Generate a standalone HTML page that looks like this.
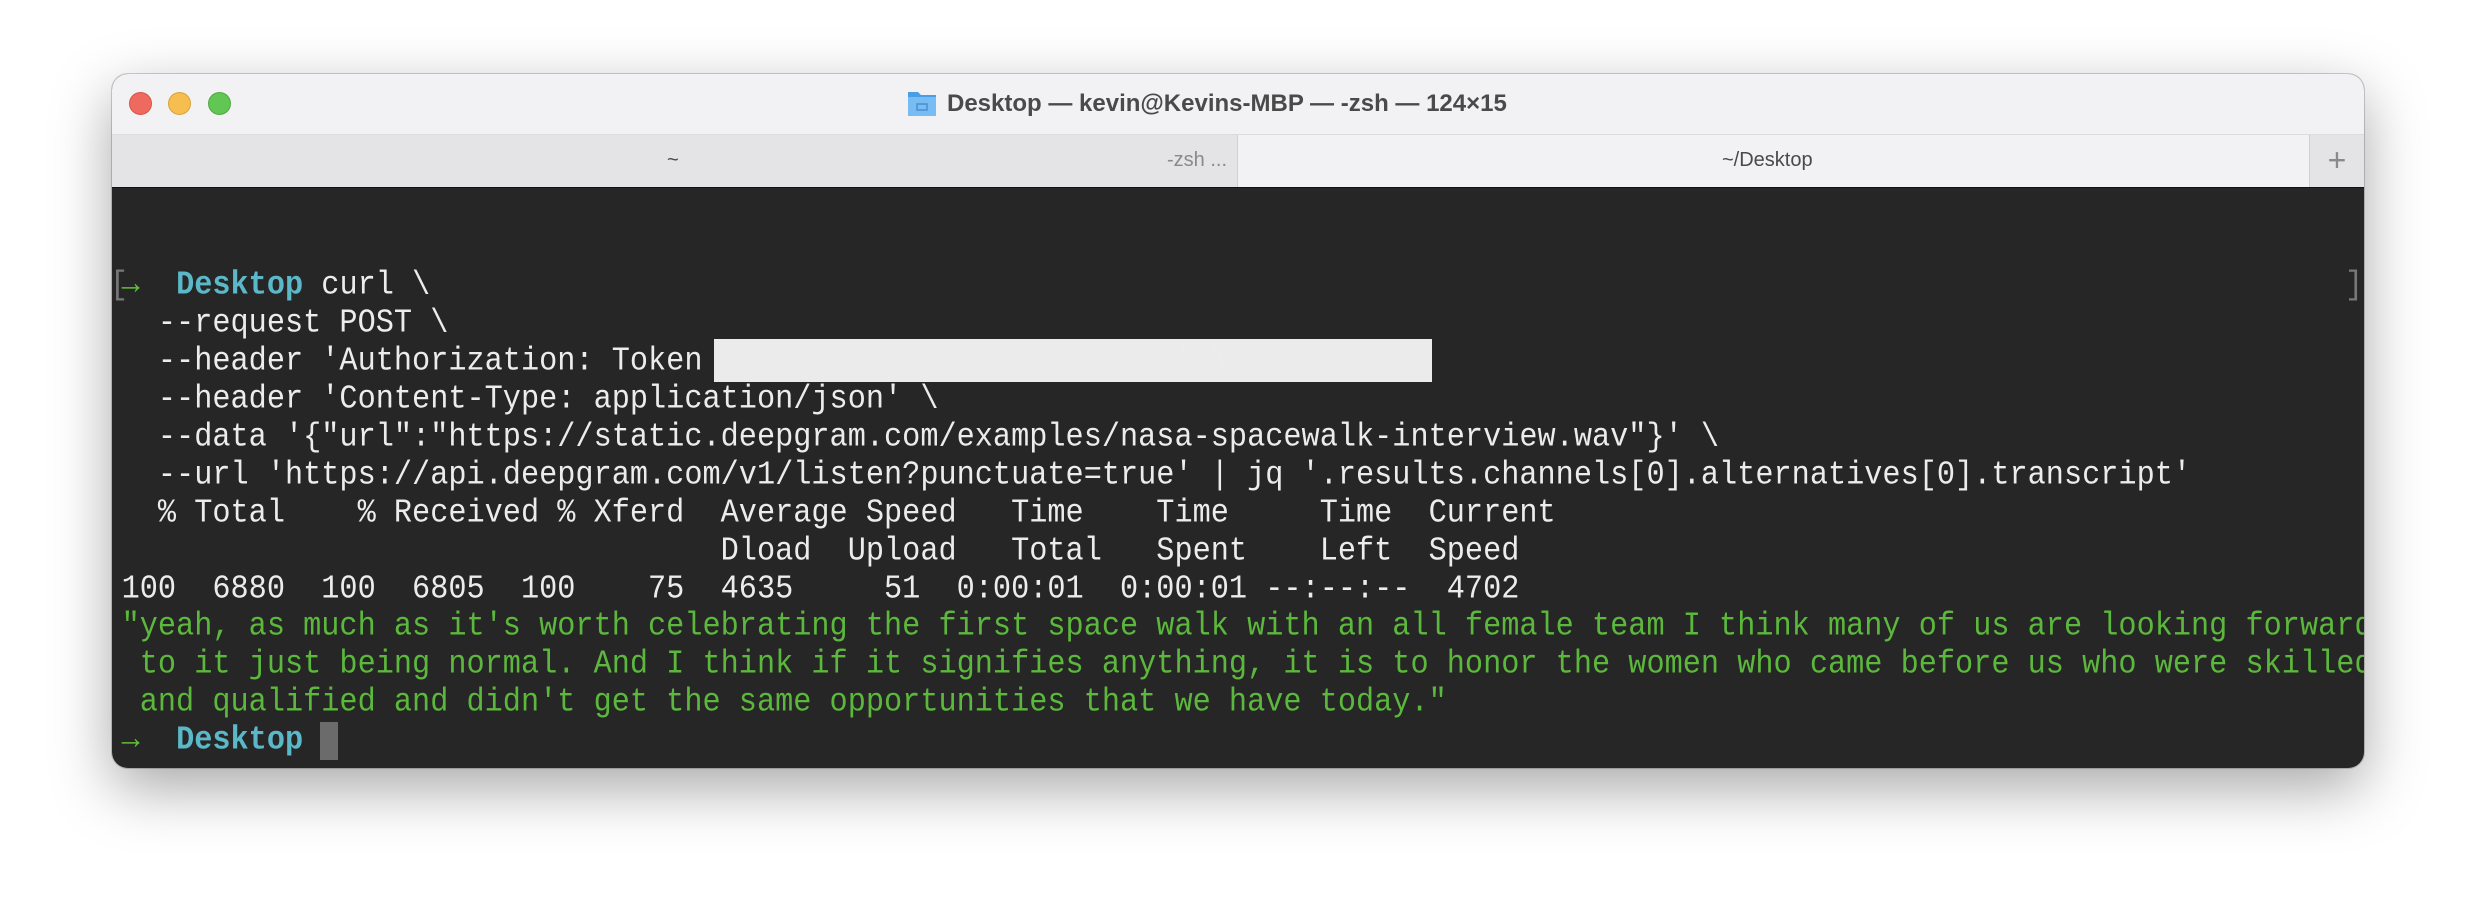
<!DOCTYPE html>
<html><head><meta charset="utf-8">
<style>
html,body{margin:0;padding:0;background:#fff;}
body{width:2476px;height:918px;position:relative;overflow:hidden;}
.win{position:absolute;left:112px;top:74px;width:2252px;height:694px;border-radius:16px;overflow:hidden;background:#262626;box-shadow:0 20px 60px rgba(0,0,0,0.35),0 0 0 1px rgba(0,0,0,0.18);}
.title{position:absolute;left:0;top:0;width:100%;height:60px;background:#f2f2f4;}
.dot{position:absolute;top:18px;width:21px;height:21px;border-radius:50%;}
.ttxt{position:absolute;left:835px;top:16px;font:bold 24px "Liberation Sans",sans-serif;color:#4a4a4a;white-space:nowrap;}
.tabs{position:absolute;left:0;top:60px;width:100%;height:52px;background:#f2f2f4;border-top:1px solid #dcdcde;border-bottom:1px solid #111;}
.tab1{position:absolute;left:0;top:0;width:1125px;height:52px;background:#e4e4e6;border-right:1px solid #d0d0d2;}
.plus{position:absolute;right:0;top:0;width:54px;height:52px;background:#e4e4e6;border-left:1px solid #d0d0d2;color:#8a8a8a;font:32px "Liberation Sans",sans-serif;text-align:center;line-height:50px;}
.tt{position:absolute;font:20px "Liberation Sans",sans-serif;color:#4a4a4a;top:14px;}
.term{position:absolute;left:0;top:113px;width:100%;}
.l{position:absolute;left:9.6px;font-family:"Liberation Mono",monospace;font-size:30.25px;line-height:38px;height:38px;white-space:pre;color:#ececec;transform:scaleY(1.1);transform-origin:0 50%;}
.c{color:#5ab8c8;font-weight:bold}
.g{color:#5fbe3a}
.q{color:#5cb83c}
</style></head><body>
<div class="win">
 <div class="title">
  <div class="dot" style="left:17px;background:#ee6a5f;border:1px solid #d55448;"></div>
  <div class="dot" style="left:56px;background:#f5be4f;border:1px solid #d9a23b;"></div>
  <div class="dot" style="left:96px;background:#62c655;border:1px solid #4ea843;"></div>
  <svg style="position:absolute;left:795px;top:15px" width="30" height="28" viewBox="0 0 30 28"><path d="M1 3h10l3 3h15v21H1z" fill="#4a9ee6"/><rect x="1" y="8" width="28" height="19" rx="1" fill="#77bdf3"/><rect x="10" y="15" width="10" height="6" fill="none" stroke="#4a8fd0" stroke-width="1.5"/></svg>
  <div class="ttxt">Desktop — kevin@Kevins-MBP — -zsh — 124×15</div>
 </div>
 <div class="tabs">
  <div class="tab1"><span class="tt" style="left:555px">~</span><span class="tt" style="right:10px;color:#8a8a8a">-zsh ...</span></div>
  <span class="tt" style="left:1610px">~/Desktop</span>
  <div class="plus">+</div>
 </div>
 <div class="term">
  <div style="position:absolute;left:602px;top:152px;width:718px;height:43px;background:#ebebeb;"></div>
  <div style="position:absolute;left:208px;top:535px;width:18px;height:38px;background:#6b6b6b"></div>
  <div class="l" style="left:-2px;top:80px;color:#777">[</div>
  <div class="l" style="left:2233px;top:80px;color:#777">]</div>
  <div class="l" style="top:80px"><span class="g">→</span>  <span class="c">Desktop</span> curl \</div>
  <div class="l" style="top:118px">  --request POST \</div>
  <div class="l" style="top:156px">  --header 'Authorization: Token                          ' \</div>
  <div class="l" style="top:194px">  --header 'Content-Type: application/json' \</div>
  <div class="l" style="top:232px">  --data '{"url":"https://static.deepgram.com/examples/nasa-spacewalk-interview.wav"}' \</div>
  <div class="l" style="top:270px">  --url 'https://api.deepgram.com/v1/listen?punctuate=true' | jq '.results.channels[0].alternatives[0].transcript'</div>
  <div class="l" style="top:308px">  % Total    % Received % Xferd  Average Speed   Time    Time     Time  Current</div>
  <div class="l" style="top:346px">                                 Dload  Upload   Total   Spent    Left  Speed</div>
  <div class="l" style="top:384px">100  6880  100  6805  100    75  4635     51  0:00:01  0:00:01 --:--:--  4702</div>
  <div class="l q" style="top:421px">"yeah, as much as it's worth celebrating the first space walk with an all female team I think many of us are looking forward</div>
  <div class="l q" style="top:459px"> to it just being normal. And I think if it signifies anything, it is to honor the women who came before us who were skilled</div>
  <div class="l q" style="top:497px"> and qualified and didn't get the same opportunities that we have today."</div>
  <div class="l" style="top:535px"><span class="g">→</span>  <span class="c">Desktop</span></div>
 </div>
</div>
</body></html>
